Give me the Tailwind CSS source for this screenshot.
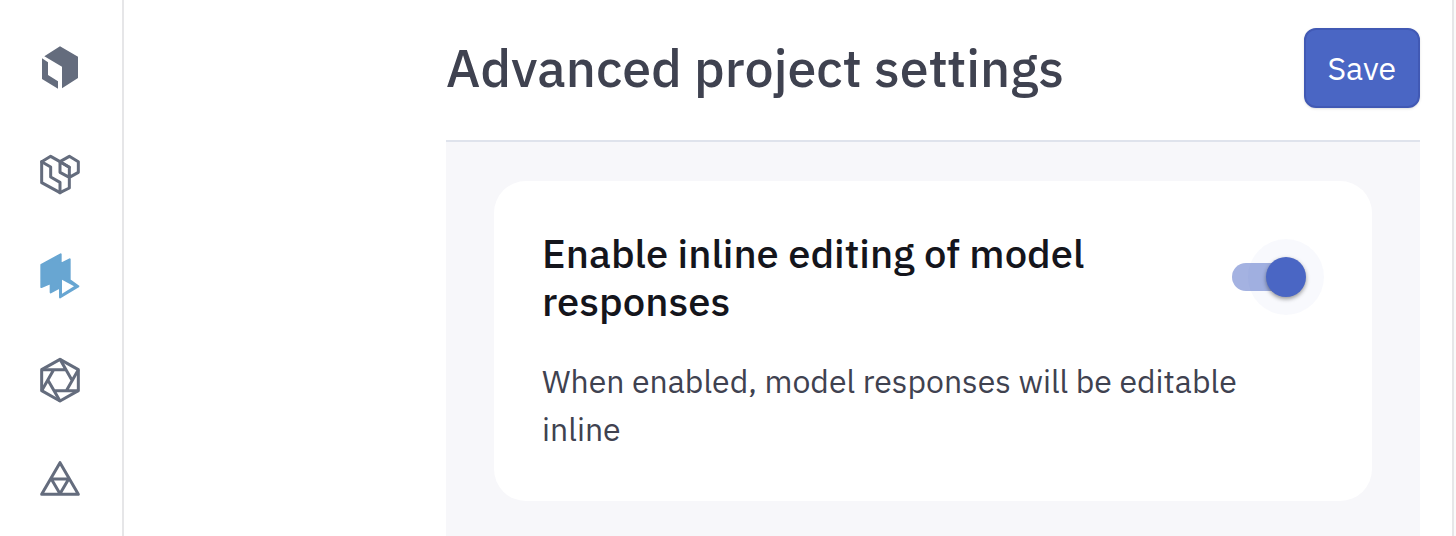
<!DOCTYPE html>
<html lang="en">
  <head>
    <meta charset="UTF-8" />
    <meta name="viewport" content="width=device-width, initial-scale=1.0" />
    <title>Advanced project settings</title>
    <script src="https://cdn.jsdelivr.net/npm/@tailwindcss/browser@4"></script>
  </head>
  <body class="flex h-screen overflow-hidden bg-white font-['IBM_Plex_Sans','Noto_Sans',sans-serif] text-[#3f4250]">
    <nav aria-label="Main" class="flex w-[124px] shrink-0 flex-col items-center gap-[60px] border-r-2 border-[#e6e6e8] pt-[46px] pr-0.5 text-[#646c7d]">
      <a href="#" aria-label="Home" class="block">
        <svg class="h-11 w-10 overflow-visible" viewBox="30 30 120 132" fill="currentColor">
          <path d="M90 31 L144 62 V126 L96 157 V92 L43 61 Z" />
          <path d="M36 67 L54 79 V117 L84 136 V158 L36 129 Z" />
        </svg>
      </a>
      <a href="#" aria-label="Catalog" class="block">
        <svg class="h-11 w-10 overflow-visible" viewBox="30 24 120 132" fill="none" stroke="currentColor" stroke-width="9" stroke-linejoin="round" stroke-linecap="round">
          <path d="M35 59 L62 43 L90 59 V91 L118 106 L145 91 V59 L118 43 L90 59 L118 76 V138 L90 152 L35 122 Z" />
          <path d="M35 59 L62 75 V105 L90 121 V152 M90 59 L118 76" />
        </svg>
      </a>
      <a href="#" aria-label="Annotate" aria-current="page" class="block text-[#68a6d2]">
        <svg class="h-11 w-10 overflow-visible" viewBox="30 30 120 132" fill="currentColor" stroke="currentColor" stroke-width="6" stroke-linejoin="round">
          <path d="M34 63 L92 31 V60 L119 46 V108 L145 127 L90 160 V130 L62 145 V117 L34 129 Z" />
          <path d="M96 107 L132 127 L96 149 Z" fill="white" stroke="none" />
        </svg>
      </a>
      <a href="#" aria-label="Model" class="block">
        <svg class="h-11 w-10 overflow-visible" viewBox="30 30 120 132" fill="none" stroke="currentColor" stroke-width="9" stroke-linejoin="round">
          <path d="M90 34 L145 65 V128 L90 159 L35 128 V65 Z" />
          <path d="M35 65 H106 M90 34 L126 97 M145 65 L109 128 M145 128 H74 M90 159 L54 97 M35 128 L71 65" />
        </svg>
      </a>
      <a href="#" aria-label="Schema" class="block">
        <svg class="h-11 w-10 overflow-visible" viewBox="30 36 120 132" fill="none" stroke="currentColor" stroke-width="9" stroke-linejoin="round">
          <path d="M90 38 L145 133 H35 Z M64 87 H116 L90 131 Z" />
        </svg>
      </a>
    </nav>

    <main class="flex min-w-0 flex-1 flex-col border-r-2 border-[#e6e6e8] pr-8 pl-[322px]">
      <header class="flex items-start justify-between border-b-2 border-[#dfe3ec] pt-7 pb-8">
        <h1 class="text-[52px] leading-[80px] font-medium whitespace-nowrap">Advanced project settings</h1>
        <button type="button" class="h-20 shrink-0 rounded-xl border-2 border-[#4159b4] bg-[#4a66c4] px-[22px] text-[32px] text-white shadow-sm hover:bg-[#4159b4]">Save</button>
      </header>

      <div class="flex-1 bg-[#f7f7fa] px-12 pt-[39px]">
        <section class="rounded-[32px] bg-white p-12">
          <div class="flex items-center justify-between">
            <h2 id="inline-editing" class="max-w-[600px] text-[40px] leading-[48px] font-medium text-[#14151c]">Enable inline editing of model responses</h2>
            <label class="relative flex h-[76px] w-[116px] shrink-0 cursor-pointer items-center">
              <input type="checkbox" role="switch" checked aria-labelledby="inline-editing" aria-describedby="inline-editing-hint" class="peer sr-only" />
              <span class="ml-6 h-7 w-[68px] rounded-full bg-gray-300 peer-checked:bg-[#a4b2e1]"></span>
              <span class="absolute left-0 size-[76px] rounded-full bg-[#4a66c4]/4 peer-checked:left-10"></span>
              <span class="absolute left-[18px] size-10 rounded-full bg-gray-50 shadow-[0_2px_4px_rgba(0,0,0,0.4)] peer-checked:left-[58px] peer-checked:bg-[#4a66c4]"></span>
            </label>
          </div>
          <p id="inline-editing-hint" class="mt-8 max-w-[740px] text-[32px] leading-[48px]">When enabled, model responses will be editable inline</p>
        </section>
      </div>
    </main>
    <div class="w-0.5 shrink-0 bg-[#fafafa]"></div>
  </body>
</html>
